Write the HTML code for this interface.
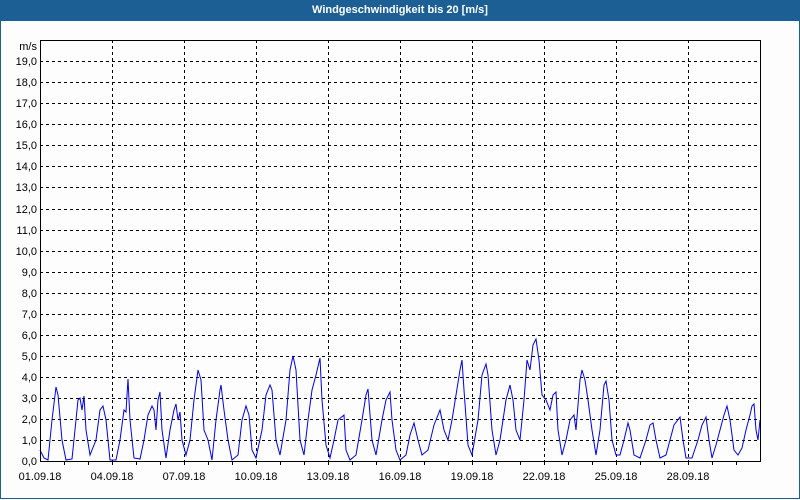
<!DOCTYPE html>
<html><head><style>
html,body{margin:0;padding:0;}
body{width:800px;height:500px;overflow:hidden;background:#fcfdfc;position:relative;font-family:"Liberation Sans",Tahoma,sans-serif;}
#frame{position:absolute;left:0;top:0;width:798px;height:498px;border:1px solid #1c5f95;border-top:none;}
#title{position:absolute;left:0;top:0;width:800px;height:21px;background:#1c5f95;color:#fff;font-weight:bold;font-size:11px;line-height:21px;text-align:center;}
svg{position:absolute;left:0;top:0;}
</style></head><body>
<div id="frame"></div>
<div id="title">Windgeschwindigkeit bis 20 [m/s]</div>
<svg width="800" height="500" font-family="Liberation Sans, Tahoma, sans-serif" font-size="11" fill="#000">
<g stroke="#000" stroke-width="1" stroke-dasharray="3,3" shape-rendering="crispEdges">
<line x1="40" x2="760" y1="440.5" y2="440.5"/><line x1="40" x2="760" y1="419.5" y2="419.5"/><line x1="40" x2="760" y1="398.5" y2="398.5"/><line x1="40" x2="760" y1="377.5" y2="377.5"/><line x1="40" x2="760" y1="356.5" y2="356.5"/><line x1="40" x2="760" y1="335.5" y2="335.5"/><line x1="40" x2="760" y1="314.5" y2="314.5"/><line x1="40" x2="760" y1="293.5" y2="293.5"/><line x1="40" x2="760" y1="272.5" y2="272.5"/><line x1="40" x2="760" y1="251.5" y2="251.5"/><line x1="40" x2="760" y1="230.5" y2="230.5"/><line x1="40" x2="760" y1="209.5" y2="209.5"/><line x1="40" x2="760" y1="187.5" y2="187.5"/><line x1="40" x2="760" y1="166.5" y2="166.5"/><line x1="40" x2="760" y1="145.5" y2="145.5"/><line x1="40" x2="760" y1="124.5" y2="124.5"/><line x1="40" x2="760" y1="103.5" y2="103.5"/><line x1="40" x2="760" y1="82.5" y2="82.5"/><line x1="40" x2="760" y1="61.5" y2="61.5"/>
<line y1="40" y2="461" x1="112.5" x2="112.5"/><line y1="40" y2="461" x1="184.5" x2="184.5"/><line y1="40" y2="461" x1="256.5" x2="256.5"/><line y1="40" y2="461" x1="328.5" x2="328.5"/><line y1="40" y2="461" x1="400.5" x2="400.5"/><line y1="40" y2="461" x1="472.5" x2="472.5"/><line y1="40" y2="461" x1="544.5" x2="544.5"/><line y1="40" y2="461" x1="616.5" x2="616.5"/><line y1="40" y2="461" x1="688.5" x2="688.5"/>
</g>
<polyline fill="none" stroke="#0000ee" stroke-width="1" points="40,450 44,458 48,460 52,420 56,387 58,395 62,440 66,460 72,459 76,420 78,400 80,398 82,410 84,396 86,430 90,455 96,440 100,410 103,406 106,420 110,460 116,460 120,440 124,410 126,412 128,379 130,420 134,458 140,459 144,440 148,415 152,406 154,410 156,430 158,400 160,392 162,430 166,458 170,430 174,410 176,404 178,420 180,412 182,440 186,455 190,440 194,400 198,370 201,380 204,430 208,440 212,460 216,420 220,390 221,385 224,410 228,440 232,460 238,455 242,420 246,406 249,415 252,450 256,458 262,430 266,395 270,385 272,390 276,440 280,455 286,420 290,370 293,356 296,370 300,440 304,455 308,420 312,390 316,375 320,358 322,400 326,445 330,458 334,440 338,420 344,415 346,450 350,460 356,455 362,420 366,395 368,389 372,440 376,455 382,420 386,400 390,392 392,420 396,450 400,460 406,455 410,435 414,423 418,440 422,455 428,450 434,425 438,415 440,410 444,430 448,440 452,420 456,395 460,370 462,360 464,390 468,445 472,455 478,420 482,375 486,364 488,375 492,430 496,455 500,440 506,400 510,385 513,400 516,430 520,440 524,400 527,360 530,370 533,345 536,339 539,360 542,395 546,400 550,410 553,395 556,392 558,430 562,455 566,440 570,420 574,415 576,430 580,380 582,370 585,380 588,400 592,430 596,455 600,430 604,385 606,381 609,400 612,440 616,455 620,455 624,440 628,423 630,430 634,455 640,458 646,440 650,425 653,423 656,440 660,458 666,455 670,440 674,425 680,417 683,440 686,458 692,458 698,440 702,425 706,417 709,440 712,458 716,445 720,430 724,415 727,406 730,420 734,450 738,455 742,448 746,430 750,415 752,406 754,404 756,430 758,440 760,420"/>
<g stroke="#000" stroke-width="1" shape-rendering="crispEdges" fill="none">
<rect x="40.5" y="40.5" width="720" height="421"/>
<path d="M64.5 461v4M88.5 461v4M112.5 461v4M136.5 461v4M160.5 461v4M184.5 461v4M208.5 461v4M232.5 461v4M256.5 461v4M280.5 461v4M304.5 461v4M328.5 461v4M352.5 461v4M376.5 461v4M400.5 461v4M424.5 461v4M448.5 461v4M472.5 461v4M496.5 461v4M520.5 461v4M544.5 461v4M568.5 461v4M592.5 461v4M616.5 461v4M640.5 461v4M664.5 461v4M688.5 461v4M712.5 461v4M736.5 461v4"/>
</g>
<g text-anchor="end">
<text x="37" y="50">m/s</text>
<text x="37" y="465">0,0</text><text x="37" y="444">1,0</text><text x="37" y="423">2,0</text><text x="37" y="402">3,0</text><text x="37" y="381">4,0</text><text x="37" y="360">5,0</text><text x="37" y="339">6,0</text><text x="37" y="318">7,0</text><text x="37" y="297">8,0</text><text x="37" y="276">9,0</text><text x="37" y="255">10,0</text><text x="37" y="234">11,0</text><text x="37" y="213">12,0</text><text x="37" y="191">13,0</text><text x="37" y="170">14,0</text><text x="37" y="149">15,0</text><text x="37" y="128">16,0</text><text x="37" y="107">17,0</text><text x="37" y="86">18,0</text><text x="37" y="65">19,0</text>
</g>
<g text-anchor="middle">
<text x="40" y="480">01.09.18</text><text x="112" y="480">04.09.18</text><text x="184" y="480">07.09.18</text><text x="256" y="480">10.09.18</text><text x="328" y="480">13.09.18</text><text x="400" y="480">16.09.18</text><text x="472" y="480">19.09.18</text><text x="544" y="480">22.09.18</text><text x="616" y="480">25.09.18</text><text x="688" y="480">28.09.18</text>
</g>
</svg>
</body></html>
